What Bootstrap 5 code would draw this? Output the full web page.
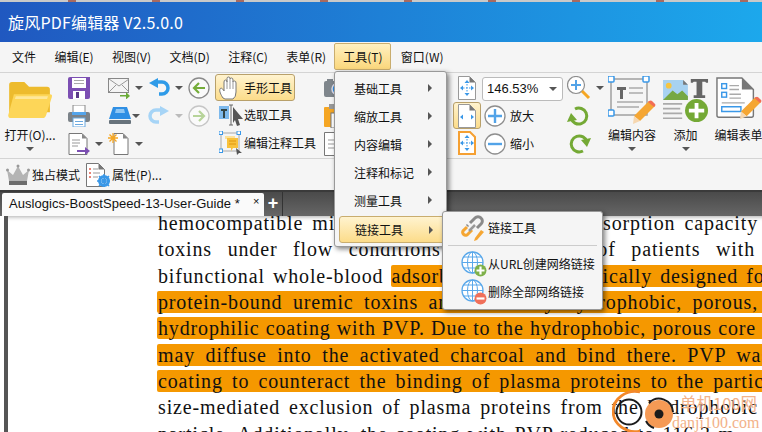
<!DOCTYPE html>
<html lang="zh-CN">
<head>
<meta charset="UTF-8">
<title>旋风PDF编辑器</title>
<link href="https://cdn.jsdelivr.net/npm/bootstrap@5.3.0/dist/css/bootstrap.min.css" rel="stylesheet">
<style>
body { width:762px; height:432px; overflow:hidden; margin:0; background:#fff; color:#111;
  font-family:"Noto Sans CJK SC","Liberation Sans",sans-serif; font-size:12px; position:relative; }
.deskstrip { height:2px; background:repeating-linear-gradient(90deg,#c9c9c9 0 68px,#a86a60 68px 76px,#c9c9c9 76px 84px); }
.titlebar { height:40px; background:linear-gradient(90deg,#2058c0,#1ca8ec); color:#fff; font-size:16px; letter-spacing:.2px; padding-left:8px; }
.menubar { height:30px; background:#f5f5f5; padding-left:12px; gap:18.4px; }
.menu-on { background:linear-gradient(#fff0c0,#fbd77c); border:1px solid #c9ad6e; border-radius:2px; height:27px; width:57px;
  margin:-1px -9px 0 -10px; }
.ribbon { height:87px; background:#f5f5f5; border-top:1px solid #d4d4d4; border-bottom:1px solid #d4d4d4; padding-top:1px; }
.rcol { display:flex; flex-direction:column; flex:none; }
.rrow { height:28px; display:flex; align-items:center; flex:none; white-space:nowrap; }
.c-open { width:60px; align-items:center; }
.c-sep { width:1px; height:80px; background:#ccc; margin:2px 7px 0 1px; }
.c-a { width:40px; }
.c-b { width:40px; }
.c-c { width:40px; }
.c-d { width:27px; }
.c-e { width:107px; }
.c-f { width:130px; padding-left:2px; }
.c-g { width:30px; padding-left:6px; }
.c-h { width:85px; }
.c-i { width:38px; }
.c-big { width:54px; align-items:center; }
.c-big2 { width:53px; align-items:center; }
.lbl-gap { margin-left:4px; }
.rnd-gap { margin-left:2px; }
.drop { width:0; height:0; border-left:4px solid transparent; border-right:4px solid transparent; border-top:4px solid #555; flex:none; }
.drop-pale { border-top-color:#bbb; }
.drop-sp { margin-left:5px; }
.folder-ic { margin-top:8px; }
.big-ic { margin-top:2px; }
.biglbl { margin-top:3px; line-height:16px; white-space:nowrap; }
.folder-ic + .biglbl { margin-top:9px; }
.bigdrop { margin-top:4px; }
.btn-on { background:linear-gradient(#fff3cf,#fcdc8a); border:1px solid #b8a06a; border-radius:3px; height:27px; width:80px; padding-left:3px; }
.btn-on-sm { width:28px; justify-content:center; padding-left:0; margin-left:-5px; }
.tool-ic { width:25px; flex:none; display:flex; }
.combo { width:81px; height:24px; border:1px solid #bbb; border-radius:3px; background:#fff; padding:0 5px 0 4px; font-size:13px; font-family:"Liberation Sans",sans-serif; margin-top:1px; }
.qbar { height:33px; background:#f5f5f5; padding-left:6px; border-bottom:2px solid #3a3a3a; gap:6px; }
.qitem { display:flex; align-items:center; gap:2px; }
.tabbar { height:24px; background:#555 linear-gradient(#4a4a4a,#666); flex:none; }
.doctab { margin-left:2px; width:262px; height:23px; margin-top:1px; background:#fafafa; font-size:13px; font-family:"Liberation Sans",sans-serif; letter-spacing:.05px; padding-left:7px; position:relative; border-radius:2px 2px 0 0; line-height:22px; white-space:nowrap; }
.tabx { position:absolute; left:251px; top:-3px; font-size:11px; }
.tabplus { color:#fff; font-size:18px; font-weight:bold; width:19px; text-align:center; line-height:22px; font-family:"Liberation Sans",sans-serif; border-right:1px solid #333; }
.docarea { height:217px; background:#fff; border-left:4px solid #fff; position:relative; overflow:hidden; box-shadow:inset 0 5px 4px -4px #aaa; }
.docedge { position:absolute; left:0; top:0; bottom:0; width:4px; background:#555; }
.doctext { padding-left:154px; margin-top:-6px; font-family:"Liberation Serif",serif; font-size:20px; letter-spacing:.85px; line-height:26.35px; color:#111; }
.dline { text-align:justify; text-align-last:justify; white-space:nowrap; height:26.35px; }
.l1 { width:600px; } .l2 { width:597px; } .l3 { width:614px; } .l4 { width:600px; } .l5 { width:598px; } .l6 { width:612px; } .l7 { width:622px; } .l8 { width:600px; } .l9 { width:577px; }
.hlt { background:#f59800; border-radius:2px 0 0 2px; padding:0 0 0 1px; margin-left:-1px; box-shadow:60px 0 0 #f59800; }
.popmenu { position:absolute; background:#f5f5f5; border:1px solid #999; border-radius:3px; box-shadow:2px 2px 5px rgba(0,0,0,.5); }
.pop-main { left:334px; top:71px; width:113px; height:176px; padding:3px 4px; }
.pitem { height:28px; display:flex; align-items:center; padding-left:15px; position:relative; font-size:12px; }
.pitem-on { background:linear-gradient(#fff3cf,#fcdc8a); border:1px solid #c9ad6e; border-radius:3px; height:27px; margin-top:1px; width:106px; }
.arr { position:absolute; left:89px; top:9px; width:0; height:0; border-top:4px solid transparent; border-bottom:4px solid transparent; border-left:4px solid #555; }
.pop-sub { left:442px; top:211px; width:161px; height:99px; padding-top:2px; }
.sitem { height:28px; display:flex; align-items:center; padding-left:18px; gap:1px; white-space:nowrap; }
.sdiv { height:1px; background:#ccc; margin:3px 5px 4px; }
.wmark { position:absolute; left:612px; top:390px; width:150px; height:42px; }
.wm1 { position:absolute; left:68px; top:2px; font-size:16.500px; color:#f3b28a; white-space:nowrap; line-height:22px; font-family:"Noto Sans CJK SC",sans-serif; }
.wm2 { position:absolute; left:60px; top:24px; font-size:16px; color:#f3b28a; font-family:"Liberation Serif",serif; line-height:17px; white-space:nowrap; }
</style>
</head>
<body>
<svg width="0" height="0" class="position-absolute">
  <defs>
    <symbol id="i-folder" viewBox="0 0 48 38"><path d="M2 3q0-3 3-3h13l5 5h19q3 0 3 3v24H2z" fill="#edbb2d"/><path d="M7 13h38q3 0 2 3l-6 19q-1 3-4 3H4q-3 0-3-3z" fill="#fdd658"/><path d="M9 15h34l-1 3H8z" fill="#fee79a"/></symbol>
    <symbol id="i-save" viewBox="0 0 22 22"><path d="M2 0h20v20q0 2-2 2H2q-2 0-2-2V2q0-2 2-2z" fill="#7c4fb3"/><rect x="4" y="1" width="14" height="10" fill="#fff"/><rect x="6" y="3" width="10" height="1" fill="#aaa"/><rect x="6" y="6" width="10" height="1" fill="#aaa"/><rect x="5" y="14" width="12" height="8" fill="#fff"/><rect x="8" y="15" width="3" height="6" fill="#5b3a8a"/></symbol>
    <symbol id="i-print" viewBox="0 0 22 22"><rect x="5" y="0" width="12" height="8" fill="#fff" stroke="#888"/><rect x="0" y="7" width="22" height="10" rx="2" fill="#7b8288"/><rect x="4" y="7" width="14" height="3" fill="#54a5ec"/><rect x="5" y="13" width="12" height="9" fill="#fff" stroke="#6aa9e0"/><rect x="7" y="16" width="8" height="1" fill="#6aa9e0"/><rect x="7" y="19" width="8" height="1" fill="#6aa9e0"/></symbol>
    <symbol id="i-export" viewBox="0 0 22 22"><path d="M1 .5h13l5 5v16H1z" fill="#fff" stroke="#777"/><path d="M14 .5v5h5z" fill="#888"/><path d="M4 7h8M4 10h8M4 13h6" stroke="#999"/><path d="M9 17h8v-3l5 4-5 4v-3H9z" fill="#7c4fb3"/></symbol>
    <symbol id="i-mail" viewBox="0 0 22 22"><rect x=".5" y="1.5" width="20" height="14" fill="#f4f4f4" stroke="#888"/><path d="M1 2l10 7 10-7M1 15l7-7M21 15l-7-7" fill="none" stroke="#999"/><path d="M12 18h6v-3l4 4-4 3.5v-3h-6z" fill="#6aab36"/></symbol>
    <symbol id="i-scan" viewBox="0 0 24 20"><path d="M5 1h14l4 12H1z" fill="#2f8fe4"/><path d="M8 3h8l1 4H7z" fill="#8fc7f5"/><rect x="1" y="14" width="22" height="4" rx="1" fill="#67727b"/></symbol>
    <symbol id="i-newdoc" viewBox="0 0 22 22"><path d="M6 .5h9l5 5v16H6z" fill="#fff" stroke="#777"/><path d="M15 .5v5h5z" fill="#888"/><path d="M5 0v10M0 5h10M1.500 1.500l7 7M8.500 1.500l-7 7" stroke="#f5a623" stroke-width="1.300"/></symbol>
    <symbol id="i-undo" viewBox="0 0 22 20"><path d="M8 4h6a6 6 0 0 1 0 12h-3" fill="none" stroke="#2f9be8" stroke-width="3.500"/><path d="M10 0v10L1 5z" fill="#2f9be8"/></symbol>
    <symbol id="i-redo" viewBox="0 0 22 20"><path d="M14 4H8a6 6 0 0 0 0 12h3" fill="none" stroke="#a6d4f6" stroke-width="3.500"/><path d="M12 0v10l9-5z" fill="#a6d4f6"/></symbol>
    <symbol id="i-back" viewBox="0 0 22 22"><circle cx="11" cy="11" r="10" fill="#fafafa" stroke="#8a8a8a" stroke-width="1.300"/><path d="M17 11H7M11 6l-5 5 5 5" fill="none" stroke="#75ad3a" stroke-width="2.200"/></symbol>
    <symbol id="i-fwd" viewBox="0 0 22 22"><circle cx="11" cy="11" r="10" fill="#fafafa" stroke="#c6c6c6" stroke-width="1.300"/><path d="M5 11h10M11 6l5 5-5 5" fill="none" stroke="#b7d49a" stroke-width="2.200"/></symbol>
    <symbol id="i-hand" viewBox="0 0 20 24"><path d="M4 22C2 19 0 15 1 13s3 0 4 2V6q0-2 1.500-2T8 6V2.500Q8 1 9.500 1T11 2.500V3q0-1 1.500-1T14 4v2q0-1 1.500-1T17 7v9q0 5-3 7H6z" fill="#fff" stroke="#777"/><path d="M8 5v8M11 3v10M14 5v8" stroke="#999"/></symbol>
    <symbol id="i-select" viewBox="0 0 24 24"><rect x="0" y="3" width="10" height="13" fill="#7db9ec"/><path d="M2 6h6v2H6v7H4V8H2z" fill="#344"/><path d="M12 2v20M10 2h4M10 22h4" stroke="#666"/><path d="M14 4l10 12-5 0 2 6-3 1-2-6-2 3z" fill="#555"/></symbol>
    <symbol id="i-note" viewBox="0 0 24 24"><rect x="2" y="2" width="18" height="18" fill="none" stroke="#aaa"/><rect x="0" y="0" width="3.500" height="3.500" fill="#fff" stroke="#3a98e8"/><rect x="18" y="0" width="3.500" height="3.500" fill="#fff" stroke="#3a98e8"/><rect x="0" y="18" width="3.500" height="3.500" fill="#fff" stroke="#3a98e8"/><path d="M6 5h10v3H6z" fill="#fde29a"/><path d="M8 7h11v10h-5l-2 3v-3H8z" fill="#f9c23c"/><path d="M10 10h7M10 13h7" stroke="#e0960c"/><path d="M17 17l6 5-3 0-2 2z" fill="#555"/></symbol>
    <symbol id="i-camera" viewBox="0 0 24 20"><rect x="0" y="3" width="24" height="16" rx="2" fill="#7f868c"/><rect x="3" y="1" width="6" height="3" fill="#7f868c"/><circle cx="14" cy="11" r="6" fill="#2f8fe4" stroke="#dde" stroke-width="1.500"/></symbol>
    <symbol id="i-clip" viewBox="0 0 24 24"><rect x="0" y="3" width="17" height="20" rx="1" fill="#f5a623"/><rect x="5" y="0" width="7" height="5" fill="#999"/><rect x="7" y="9" width="17" height="15" fill="#fff" stroke="#777"/><path d="M10 13h11M10 16h11M10 19h11" stroke="#999"/></symbol>
    <symbol id="i-doc" viewBox="0 0 22 24"><path d="M.5.5h14l6 6v17H.5z" fill="#fff" stroke="#777"/><path d="M14 .5v6h6z" fill="#888"/><path d="M4 8h12M4 12h12M4 16h12" stroke="#999"/></symbol>
    <symbol id="i-fit" viewBox="0 0 18 24"><path d="M.5.5h11l6 6v17H.5z" fill="#fff" stroke="#999"/><path d="M11.500.5v6h6z" fill="#777"/><path d="M9 8v8M5 12h8" stroke="#3a98e8" stroke-dasharray="1.500 1.500"/><path d="M9 4l2.500 3h-5zM9 20l2.500-3h-5zM2 12l3-2.500v5zM16 12l-3-2.500v5z" fill="#3a98e8"/></symbol>
    <symbol id="i-fitw" viewBox="0 0 18 24"><path d="M.5.500h11l6 6v17H.5z" fill="#fff" stroke="#999"/><path d="M11.500.5v6h6z" fill="#777"/><path d="M2 13l3-2.500v5zM16 13l-3-2.500v5z" fill="#3a98e8"/></symbol>
    <symbol id="i-fito" viewBox="0 0 18 24"><path d="M1 1h11l5 5v17H1z" fill="#fff" stroke="#f5a033" stroke-width="2"/><path d="M9 8v8M5 12h8" stroke="#3a98e8" stroke-dasharray="1.500 1.500"/><path d="M9 4l2.500 3h-5zM9 20l2.500-3h-5zM2 12l3-2.500v5zM16 12l-3-2.500v5z" fill="#3a98e8"/></symbol>
    <symbol id="i-plus" viewBox="0 0 22 22"><circle cx="11" cy="11" r="10" fill="#fff" stroke="#8e8e8e" stroke-width="1.300"/><path d="M11 4v14M4 11h14" stroke="#52a3e8" stroke-width="2.400"/></symbol>
    <symbol id="i-minus" viewBox="0 0 22 22"><circle cx="11" cy="11" r="10" fill="#fff" stroke="#8e8e8e" stroke-width="1.300"/><path d="M4 11h14" stroke="#52a3e8" stroke-width="2.400"/></symbol>
    <symbol id="i-zoom" viewBox="0 0 24 24"><circle cx="9" cy="9" r="8.500" fill="#fff" stroke="#8e8e8e" stroke-width="1.200"/><path d="M9 4v10M4 9h10" stroke="#52a3e8" stroke-width="2"/><path d="M15 15l7 7" stroke="#f5a623" stroke-width="3"/></symbol>
    <symbol id="i-ccw" viewBox="0 0 24 24"><path d="M8 5a8 8 0 1 1-4 9" fill="none" stroke="#74a935" stroke-width="3"/><path d="M0 18l4-9 6 7z" fill="#74a935"/></symbol>
    <symbol id="i-cw" viewBox="0 0 24 24"><path d="M16 19a8 8 0 1 1 4-9" fill="none" stroke="#74a935" stroke-width="3"/><path d="M24 6l-4 9-6-7z" fill="#74a935"/></symbol>
    <symbol id="i-pencil" viewBox="0 0 24 24"><path d="M17 1l6 5L8 21l-6-5z" fill="#f5a633"/><path d="M17 1q2-1 3 0l3 3q1 1 0 2l-1 1-6-5z" fill="#f26d55"/><path d="M2 16l6 5-7 3z" fill="#f6d7b0"/></symbol>
    <symbol id="i-editc" viewBox="0 0 48 48"><rect x="3" y="3" width="36" height="36" fill="none" stroke="#a0a0a0" stroke-width="1.500"/><rect x="0" y="0" width="6" height="6" rx="1" fill="#fff" stroke="#3a98e8" stroke-width="1.500"/><rect x="35" y="0" width="6" height="6" rx="1" fill="#fff" stroke="#3a98e8" stroke-width="1.500"/><rect x="0" y="34" width="6" height="6" rx="1" fill="#fff" stroke="#3a98e8" stroke-width="1.500"/><path d="M9 11h9v3h-3v9h-3v-9H9z" fill="#666"/><path d="M21 12h14M21 17h14M9 26h26M9 31h22" stroke="#aaa" stroke-width="1.500"/><use href="#i-pencil" x="24" y="24" width="24" height="24"/></symbol>
    <symbol id="i-add" viewBox="0 0 48 48"><path d="M0 3h21l5 5v16H0z" fill="#a7d2f1"/><path d="M0 24l10-10 5 4 5-4 6 6v4H0z" fill="#76a843"/><circle cx="6" cy="9" r="3" fill="#f5c542"/><path d="M21 3l5 5h-5z" fill="#777"/><path d="M29 2h18v4h-2l-1-1h-3v14h3v3H32v-3h3V5h-3l-1 1h-2z" fill="#666"/><path d="M0 28h20M0 33h18M0 38h20M0 43h20" stroke="#aaa" stroke-width="1.700"/><circle cx="35" cy="35" r="12" fill="#74a935"/><path d="M35 27v16M27 35h16" stroke="#fff" stroke-width="4"/></symbol>
    <symbol id="i-form" viewBox="0 0 48 48"><path d="M1 1h26l12 12v27q0 2-2 2H3q-2 0-2-2z" fill="#fff" stroke="#777" stroke-width="1.500"/><path d="M27 1v12h12z" fill="#777"/><rect x="6" y="7" width="5" height="5" fill="#fff" stroke="#3a98e8" stroke-width="1.500"/><rect x="6" y="16" width="5" height="5" fill="#fff" stroke="#3a98e8" stroke-width="1.500"/><path d="M14 9h10M14 13h10M14 18h12M14 22h12M6 27h24" stroke="#aaa" stroke-width="1.400"/><path d="M6 31h20v5H6z" fill="none" stroke="#3a98e8" stroke-width="1.500"/><use href="#i-pencil" x="24" y="20" width="24" height="24"/></symbol>
    <symbol id="i-crown" viewBox="0 0 24 22"><path d="M1 6l6 5 5-9 5 9 6-5-2 11H3z" fill="#b4b4b4"/><rect x="3" y="17" width="18" height="4" fill="#6d6d6d"/><circle cx="12" cy="2" r="1.500" fill="#999"/><circle cx="1.500" cy="6" r="1.500" fill="#999"/><circle cx="22.500" cy="6" r="1.500" fill="#999"/></symbol>
    <symbol id="i-props" viewBox="0 0 24 24"><path d="M.5.5h12l6 6v17H.5z" fill="#fff" stroke="#777"/><path d="M12.500.5v6h6z" fill="#777"/><path d="M3 6h2M3 10h2M3 14h2" stroke="#e25b4a" stroke-width="1.500"/><path d="M7 6h5M7 10h7M7 14h5" stroke="#999"/><circle cx="18" cy="18" r="4.500" fill="none" stroke="#3a98e8" stroke-width="3"/><path d="M18 11v14M11 18h14M13 13l10 10M23 13L13 23" stroke="#3a98e8" stroke-width="1.500"/></symbol>
    <symbol id="i-link" viewBox="0 0 26 26"><path d="M11 15l-5 5a3 3 0 0 1-4-4l4-4" fill="none" stroke="#f5a633" stroke-width="3"/><path d="M7 10l-1 1M9 8l5-5a4 4 0 0 1 6 0 4 4 0 0 1 0 6l-4 4" fill="none" stroke="#8a8a8a" stroke-width="3"/><path d="M8 16l6-6" stroke="#999" stroke-width="2.500"/><path d="M20 15l3 2-7 8-3 1 1-3z" fill="#f5a633"/></symbol>
    <symbol id="i-globe" viewBox="0 0 26 26"><circle cx="11.500" cy="11.500" r="10.500" fill="#fff" stroke="#5aa8ea" stroke-width="1.300"/><ellipse cx="11.500" cy="11.500" rx="5" ry="10.500" fill="none" stroke="#5aa8ea"/><path d="M1 11.500h21M2.500 6h18M2.500 17h18M11.500 1v21" stroke="#5aa8ea"/></symbol>
    <symbol id="i-globe-add" viewBox="0 0 26 26"><use href="#i-globe" width="26" height="26"/><circle cx="19.500" cy="19.500" r="6" fill="#7eb04a"/><path d="M19.500 15.500v8M15.500 19.500h8" stroke="#fff" stroke-width="2.200"/></symbol>
    <symbol id="i-globe-del" viewBox="0 0 26 26"><use href="#i-globe" width="26" height="26"/><circle cx="19.500" cy="19.500" r="6" fill="#f0705a"/><path d="M15.500 19.500h8" stroke="#fff" stroke-width="2.200"/></symbol>
    <symbol id="i-logo" viewBox="0 0 70 42"><path d="M28 2A22 20 0 1 0 28 41" fill="none" stroke="#f3882a" stroke-width="2.800"/><circle cx="17" cy="22" r="12.500" fill="none" stroke="#1b1b1b" stroke-width="2"/><circle cx="47" cy="24" r="14" fill="#f59a55"/><path d="M37 13A14 14 0 0 1 61 22M34 31a14 14 0 0 0 8 7" fill="none" stroke="#1b1b1b" stroke-width="2"/><circle cx="47" cy="24" r="4.500" fill="#1b1b1b"/></symbol>
  </defs>
</svg>

<div class="deskstrip"></div>
<div class="titlebar d-flex align-items-center">旋风PDF编辑器 V2.5.0.0</div>
<div class="menubar d-flex align-items-center">
  <span>文件</span><span>编辑(E)</span><span>视图(V)</span><span>文档(D)</span><span>注释(C)</span><span>表单(R)</span>
  <span class="menu-on d-flex align-items-center justify-content-center">工具(T)</span>
  <span>窗口(W)</span>
</div>

<div class="ribbon d-flex">
  <div class="rcol c-open">
    <svg class="folder-ic" width="46" height="36"><use href="#i-folder"/></svg>
    <div class="biglbl">打开(O)...</div>
    <div class="drop bigdrop"></div>
  </div>
  <div class="c-sep"></div>
  <div class="rcol c-a">
    <div class="rrow"><svg width="22" height="22"><use href="#i-save"/></svg></div>
    <div class="rrow"><svg width="22" height="22"><use href="#i-print"/></svg></div>
    <div class="rrow"><svg width="22" height="22"><use href="#i-export"/></svg><span class="drop drop-sp"></span></div>
  </div>
  <div class="rcol c-b">
    <div class="rrow"><svg width="22" height="22"><use href="#i-mail"/></svg><span class="drop drop-sp"></span></div>
    <div class="rrow"><svg width="24" height="20"><use href="#i-scan"/></svg><span class="drop"></span></div>
    <div class="rrow"><svg width="22" height="22"><use href="#i-newdoc"/></svg><span class="drop drop-sp"></span></div>
  </div>
  <div class="rcol c-c">
    <div class="rrow"><svg width="22" height="20"><use href="#i-undo"/></svg><span class="drop drop-sp"></span></div>
    <div class="rrow"><svg width="22" height="20"><use href="#i-redo"/></svg><span class="drop drop-pale drop-sp"></span></div>
  </div>
  <div class="rcol c-d">
    <div class="rrow"><svg width="22" height="22"><use href="#i-back"/></svg></div>
    <div class="rrow"><svg width="22" height="22"><use href="#i-fwd"/></svg></div>
  </div>
  <div class="rcol c-e">
    <div class="rrow btn-on"><span class="tool-ic"><svg width="20" height="24"><use href="#i-hand"/></svg></span>手形工具</div>
    <div class="rrow"><span class="tool-ic ms-1"><svg width="24" height="24"><use href="#i-select"/></svg></span>选取工具</div>
    <div class="rrow"><span class="tool-ic ms-1"><svg width="24" height="24"><use href="#i-note"/></svg></span>编辑注释工具</div>
  </div>
  <div class="rcol c-f">
    <div class="rrow"><svg width="24" height="20"><use href="#i-camera"/></svg></div>
    <div class="rrow"><svg width="24" height="24"><use href="#i-clip"/></svg></div>
    <div class="rrow"><svg width="22" height="24"><use href="#i-doc"/></svg></div>
  </div>
  <div class="rcol c-g">
    <div class="rrow"><svg width="18" height="24"><use href="#i-fit"/></svg></div>
    <div class="rrow btn-on btn-on-sm"><svg width="18" height="24"><use href="#i-fitw"/></svg></div>
    <div class="rrow"><svg width="18" height="24"><use href="#i-fito"/></svg></div>
  </div>
  <div class="rcol c-h">
    <div class="rrow"><div class="combo d-flex align-items-center justify-content-between">146.53%<span class="drop"></span></div></div>
    <div class="rrow"><svg class="rnd-gap" width="22" height="22"><use href="#i-plus"/></svg><span class="lbl-gap">放大</span></div>
    <div class="rrow"><svg class="rnd-gap" width="22" height="22"><use href="#i-minus"/></svg><span class="lbl-gap">缩小</span></div>
  </div>
  <div class="rcol c-i">
    <div class="rrow"><svg width="24" height="24"><use href="#i-zoom"/></svg><span class="drop drop-sp"></span></div>
    <div class="rrow"><svg width="24" height="24"><use href="#i-ccw"/></svg></div>
    <div class="rrow"><svg width="24" height="24"><use href="#i-cw"/></svg></div>
  </div>
  <div class="rcol c-big">
    <svg class="big-ic" width="48" height="48"><use href="#i-editc"/></svg>
    <div class="biglbl">编辑内容</div>
    <div class="drop bigdrop"></div>
  </div>
  <div class="rcol c-big2">
    <svg class="big-ic" width="46" height="48"><use href="#i-add"/></svg>
    <div class="biglbl">添加</div>
    <div class="drop bigdrop"></div>
  </div>
  <div class="rcol c-big2">
    <svg class="big-ic" width="46" height="48"><use href="#i-form"/></svg>
    <div class="biglbl">编辑表单</div>
  </div>
</div>

<div class="qbar d-flex align-items-center">
  <div class="qitem"><svg width="24" height="22"><use href="#i-crown"/></svg>独占模式</div>
  <div class="qitem"><svg width="24" height="24"><use href="#i-props"/></svg>属性(P)...</div>
</div>

<div class="tabbar d-flex">
  <div class="doctab">Auslogics-BoostSpeed-13-User-Guide *<span class="tabx">×</span></div>
  <div class="tabplus">+</div>
</div>

<div class="docarea">
  <div class="docedge"></div>
  <div class="doctext">
    <div class="dline l1">hemocompatible microspheres with very high adsorption capacity</div>
    <div class="dline l2">toxins under flow conditions in the blood of patients with</div>
    <div class="dline l3">bifunctional whole-blood <span class="hlt">adsorbent that is specifically designed for</span></div>
    <div class="dline l4"><span class="hlt">protein-bound uremic toxins and is a very hydrophobic, porous,</span></div>
    <div class="dline l5"><span class="hlt">hydrophilic coating with PVP. Due to the hydrophobic, porous core</span></div>
    <div class="dline l6"><span class="hlt">may diffuse into the activated charcoal and bind there. PVP was</span></div>
    <div class="dline l7"><span class="hlt">coating to counteract the binding of plasma proteins to the particle</span></div>
    <div class="dline l8">size-mediated exclusion of plasma proteins from the hydrophobic</div>
    <div class="dline l9">particle. Additionally, the coating with PVP reduced to 116.3 m</div>
  </div>
</div>

<div class="popmenu pop-main">
  <div class="pitem">基础工具<span class="arr"></span></div>
  <div class="pitem">缩放工具<span class="arr"></span></div>
  <div class="pitem">内容编辑<span class="arr"></span></div>
  <div class="pitem">注释和标记<span class="arr"></span></div>
  <div class="pitem">测量工具<span class="arr"></span></div>
  <div class="pitem pitem-on">链接工具<span class="arr"></span></div>
</div>
<div class="popmenu pop-sub">
  <div class="sitem"><svg width="26" height="26"><use href="#i-link"/></svg>链接工具</div>
  <div class="sdiv"></div>
  <div class="sitem"><svg width="26" height="26"><use href="#i-globe-add"/></svg>从URL创建网络链接</div>
  <div class="sitem"><svg width="26" height="26"><use href="#i-globe-del"/></svg>删除全部网络链接</div>
</div>

<div class="wmark">
  <svg width="70" height="42"><use href="#i-logo"/></svg>
  <div class="wm1">单机100网</div>
  <div class="wm2">danji100.com</div>
</div>
</body>
</html>
